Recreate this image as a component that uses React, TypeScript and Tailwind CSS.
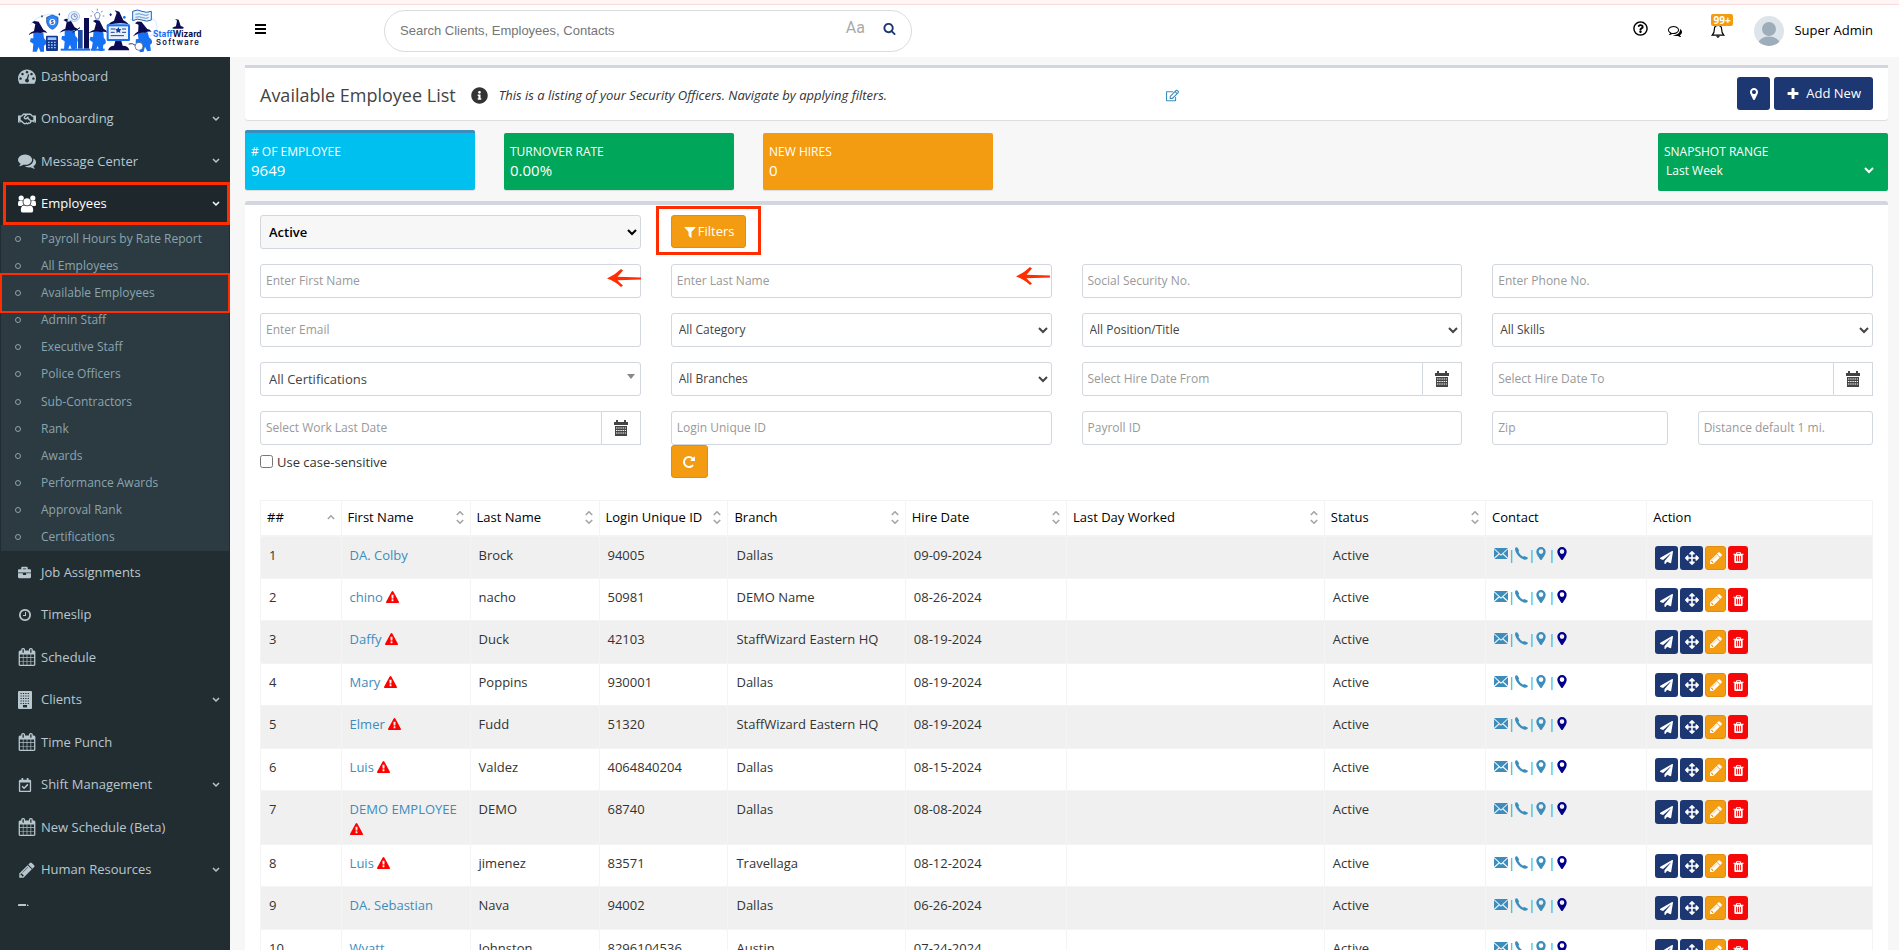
import React from 'react';
import {
  FaArrowsAlt,
  FaBriefcase,
  FaInfoCircle,
  FaPaperPlane,
  FaRegCalendarCheck,
  FaRegEdit,
  FaRegHandshake,
  FaRegQuestionCircle,
} from 'react-icons/fa';

interface GlyphProps {
  d: string;
  className?: string;
}

// Solid glyphs drawn on a 1792 unit grid
const Glyph: React.FC<GlyphProps> = ({ d, className = 'size-[14px]' }) => (
  <svg viewBox="0 0 1792 1792" fill="currentColor" className={`shrink-0 ${className}`} aria-hidden="true">
    <path d={d} />
  </svg>
);

const PATHS = {
  search:
    'M1216 832q0-185-131.5-316.5t-316.5-131.5-316.5 131.5-131.5 316.5 131.5 316.5 316.5 131.5 316.5-131.5 131.5-316.5zm512 832q0 52-38 90t-90 38q-54 0-90-38l-343-342q-179 124-399 124-143 0-273.5-55.5t-225-150-150-225-55.5-273.5 55.5-273.5 150-225 225-150 273.5-55.5 273.5 55.5 225 150 150 225 55.5 273.5q0 220-124 399l343 343q37 37 37 90z',
  filter:
    'M1595 295q17 41-14 70l-493 493v742q0 42-39 59-13 5-25 5-27 0-45-19l-256-256q-19-19-19-45v-486l-493-493q-31-29-14-70 17-39 59-39h1280q42 0 59 39z',
  calendar:
    'M192 1664h288v-288h-288v288zm352 0h320v-288h-320v288zm-352-352h288v-320h-288v320zm352 0h320v-320h-320v320zm-352-384h288v-288h-288v288zm736 736h320v-288h-320v288zm-384-736h320v-288h-320v288zm768 736h288v-288h-288v288zm-384-352h320v-320h-320v320zm-352-864v-288q0-13-9.5-22.5t-22.5-9.5h-64q-13 0-22.5 9.5t-9.5 22.5v288q0 13 9.5 22.5t22.5 9.5h64q13 0 22.5-9.5t9.5-22.5zm736 864h288v-320h-288v320zm-384-384h320v-288h-320v288zm384 0h288v-288h-288v288zm32-480v-288q0-13-9.5-22.5t-22.5-9.5h-64q-13 0-22.5 9.5t-9.5 22.5v288q0 13 9.5 22.5t22.5 9.5h64q13 0 22.5-9.5t9.5-22.5zm384-64v1280q0 52-38 90t-90 38h-1408q-52 0-90-38t-38-90v-1280q0-52 38-90t90-38h128v-96q0-66 47-113t113-47h64q66 0 113 47t47 113v96h384v-96q0-66 47-113t113-47h64q66 0 113 47t47 113v96h128q52 0 90 38t38 90z',
  dashboard:
    'M384 1152q0-53-37.5-90.5t-90.5-37.5-90.5 37.5-37.5 90.5 37.5 90.5 90.5 37.5 90.5-37.5 37.5-90.5zm192-448q0-53-37.5-90.5t-90.5-37.5-90.5 37.5-37.5 90.5 37.5 90.5 90.5 37.5 90.5-37.5 37.5-90.5zm428 481l101-382q6-26-7.5-48.5t-38.5-29.5-48 6.5-30 39.5l-101 382q-60 5-107 43.5t-63 98.5q-20 77 20 146t117 89 146-20 89-117q16-60-6-117t-72-91zm660-33q0-53-37.5-90.5t-90.5-37.5-90.5 37.5-37.5 90.5 37.5 90.5 90.5 37.5 90.5-37.5 37.5-90.5zm-640-640q0-53-37.5-90.5t-90.5-37.5-90.5 37.5-37.5 90.5 37.5 90.5 90.5 37.5 90.5-37.5 37.5-90.5zm448 192q0-53-37.5-90.5t-90.5-37.5-90.5 37.5-37.5 90.5 37.5 90.5 90.5 37.5 90.5-37.5 37.5-90.5zm320 448q0 261-141 483-19 29-54 29h-1402q-35 0-54-29-141-221-141-483 0-182 71-348t191-286 286-191 348-71 348 71 286 191 191 286 71 348z',
  comments:
    'M1408 768q0 139-94 257t-256.5 186.5-353.5 68.5q-86 0-176-16-124 88-278 128-36 9-86 16h-3q-11 0-20.5-8t-11.5-21q-1-3-1-6.5t.5-6.5 2-6l2.5-5 3.5-5.5 4-5 4.5-5 4-4.5q5-6 23-25t26-29.5 22.5-29 25-38.5 20.5-44q-124-72-195-177t-71-224q0-139 94-257t256.5-186.5 353.5-68.5 353.5 68.5 256.5 186.5 94 257zm384 256q0 120-71 224.5t-195 176.5q10 24 20.5 44t25 38.5 22.5 29 26 29.5 23 25q1 1 4 4.5t4.5 5 4 5 3.5 5.5l2.5 5 2 6 .5 6.5-1 6.5q-3 14-13 22t-22 7q-50-7-86-16-154-40-278-128-90 16-176 16-271 0-472-132 58 4 88 4 161 0 309-45t264-129q125-92 192-212t67-254q0-77-23-152 129 71 204 178t75 230z',
  commentsOutline:
    'M704 384q-153 0-286 52t-211.5 141-78.5 191q0 82 53 158t149 132l97 56-35 84q34-20 62-39l44-31 53 10q78 14 153 14 153 0 286-52t211.5-141 78.5-191-78.5-191-211.5-141-286-52zm0-128q191 0 353.5 68.5t256.5 186.5 94 257-94 257-256.5 186.5-353.5 68.5q-86 0-176-16-124 88-278 128-36 9-86 16h-3q-11 0-20.5-8t-11.5-21q-1-3-1-6.5t.5-6.5 2-6l2.5-5 3.5-5.5 4-5 4.5-5 4-4.5q5-6 23-25t26-29.5 22.5-29 25-38.5 20.5-44q-124-72-195-177t-71-224q0-139 94-257t256.5-186.5 353.5-68.5zm822 1169q10 24 20.5 44t25 38.5 22.5 29 26 29.5 23 25q1 1 4 4.5t4.5 5 4 5 3.5 5.5l2.5 5 2 6 .5 6.5-1 6.5q-3 14-13 22t-22 7q-50-7-86-16-154-40-278-128-90 16-176 16-271 0-472-132 58 4 88 4 161 0 309-45t264-129q125-92 192-212t67-254q0-77-23-152 129 71 204 178t75 230q0 120-71 224.5t-195 176.5z',
  plus: 'M1600 736v192q0 40-28 68t-68 28h-416v416q0 40-28 68t-68 28h-192q-40 0-68-28t-28-68v-416h-416q-40 0-68-28t-28-68v-192q0-40 28-68t68-28h416v-416q0-40 28-68t68-28h192q40 0 68 28t28 68v416h416q40 0 68 28t28 68z',
  marker:
    'M1152 640q0-106-75-181t-181-75-181 75-75 181 75 181 181 75 181-75 75-181zm256 0q0 109-33 179l-364 774q-16 33-47.5 52t-67.5 19-67.5-19-46.5-52l-365-774q-33-70-33-179 0-212 150-362t362-150 362 150 150 362z',
  repeat:
    'M1664 256v448q0 26-19 45t-45 19h-448q-42 0-59-40-17-39 14-69l138-138q-148-137-349-137-104 0-198.5 40.5t-163.5 109.5-109.5 163.5-40.5 198.5 40.5 198.5 109.5 163.5 163.5 109.5 198.5 40.5q119 0 225-52t179-147q7-10 23-12 15 0 25 9l137 138q9 8 9.5 20.5t-7.5 22.5q-109 132-264 204.5t-327 72.5q-156 0-298-61t-245-164-164-245-61-298 61-298 164-245 245-164 298-61q147 0 284.5 55.5t244.5 156.5l130-129q29-31 70-14 39 17 39 59z',
  pencil:
    'M491 1536l91-91-235-235-91 91v107h128v128h107zm523-928q0-22-22-22-10 0-17 7l-542 542q-7 7-7 17 0 22 22 22 10 0 17-7l542-542q7-7 7-17zm-54-192l416 416-832 832h-416v-416zm683 96q0 53-37 90l-166 166-416-416 166-165q36-38 90-38 53 0 91 38l235 234q37 39 37 91z',
  trash:
    'M704 1376v-704q0-14-9-23t-23-9h-64q-14 0-23 9t-9 23v704q0 14 9 23t23 9h64q14 0 23-9t9-23zm256 0v-704q0-14-9-23t-23-9h-64q-14 0-23 9t-9 23v704q0 14 9 23t23 9h64q14 0 23-9t9-23zm256 0v-704q0-14-9-23t-23-9h-64q-14 0-23 9t-9 23v704q0 14 9 23t23 9h64q14 0 23-9t9-23zm-544-992h448l-48-117q-7-9-17-11h-317q-10 2-17 11zm928 32v64q0 14-9 23t-23 9h-96v948q0 83-47 143.5t-113 60.5h-832q-66 0-113-58.5t-47-141.5v-952h-96q-14 0-23-9t-9-23v-64q0-14 9-23t23-9h309l70-167q15-37 54-63t79-26h320q40 0 79 26t54 63l70 167h309q14 0 23 9t9 23z',
  clock:
    'M1024 544v448q0 14-9 23t-23 9h-320q-14 0-23-9t-9-23v-64q0-14 9-23t23-9h224v-352q0-14 9-23t23-9h64q14 0 23 9t9 23zm416 352q0-148-73-273t-198-198-273-73-273 73-198 198-73 273 73 273 198 198 273 73 273-73 198-198 73-273zm224 0q0 209-103 385.5t-279.5 279.5-385.5 103-385.5-103-279.5-279.5-103-385.5 103-385.5 279.5-279.5 385.5-103 385.5 103 279.5 279.5 103 385.5z',
  warning:
    'M1024 1375v-190q0-14-9.5-23.5t-22.5-9.5h-192q-13 0-22.5 9.5t-9.5 23.5v190q0 14 9.5 23.5t22.5 9.5h192q13 0 22.5-9.5t9.5-23.5zm-2-374l18-459q0-12-10-19-13-11-24-11h-220q-11 0-24 11-10 7-10 21l17 457q0 10 10 16.5t24 6.5h185q14 0 23.5-6.5t10.5-16.5zm-14-934l768 1408q35 63-2 126-17 29-46.5 46t-63.5 17h-1536q-34 0-63.5-17t-46.5-46q-37-63-2-126l768-1408q17-31 47-49t65-18 65 18 47 49z',
};

const UsersIcon = () => (
  <svg viewBox="0 0 18 18" fill="currentColor" className="h-[18px] w-[18px]" aria-hidden="true">
    <circle cx="3.2" cy="3" r="2.6" />
    <circle cx="14.8" cy="3" r="2.6" />
    <path d="M0 10V8.2Q0 5.8 1.8 5.8H4.6Q4.4 8.4 5.6 9.8Q4 10 3.4 11H1.4Q0 11 0 10zM18 10V8.2Q18 5.8 16.2 5.8H13.4Q13.6 8.4 12.4 9.8Q14 10 14.6 11H16.6Q18 11 18 10z" />
    <circle cx="9" cy="6.8" r="3.6" />
    <path d="M2.8 15.4Q2.8 10.4 6 10.4Q9 12 12 10.4Q15.2 10.4 15.2 15.4Q15.2 17.6 13 17.6H5Q2.8 17.6 2.8 15.4z" />
  </svg>
);

const BuildingIcon = () => (
  <svg viewBox="0 0 14 18" className="h-[18px] w-[14px]" aria-hidden="true">
    <rect width="14" height="18" rx="1" fill="currentColor" />
    {[2.5, 5, 7.5, 10, 12.5].map((y) => (
      <path key={y} d={`M2.5 ${y}h1.2m1.2 0h1.2m1.2 0h1.2m1.2 0h1.2`} stroke="#222d32" strokeWidth="1.2" />
    ))}
    <rect x="5" y="14" width="4" height="2.4" fill="#222d32" />
  </svg>
);

const FileIcon = () => (
  <svg viewBox="0 0 12 14" fill="currentColor" className="h-[14px] w-3" aria-hidden="true">
    <path d="M1 0h7v4h4v9q0 1-1 1H1q-1 0-1-1V1q0-1 1-1zM9 0l3 3H9z" />
  </svg>
);

const GridCalendar = () => (
  <svg viewBox="0 0 14 16" className="h-4 w-[14px]" aria-hidden="true">
    <path d="M0 2h2V0h2v2h6V0h2v2h2v3H0zM1 6h12v10H1z" fill="#444" />
    <path d="M2 8h10M2 10.5h10M2 13h10" stroke="#fff" strokeWidth="1.2" strokeDasharray="1.4 0.8" />
  </svg>
);

const Envelope = () => (
  <svg viewBox="0 0 14 11" className="h-[11px] w-[14px]" aria-hidden="true">
    <path d="M0 0h14L7 6.4zM0 1.2L4.6 5.6 0 9.8zM14 1.2L9.4 5.6 14 9.8zM.4 11L5.4 6.4 7 7.8 8.6 6.4 13.6 11z" fill="#3c8dbc" />
  </svg>
);

const Phone = () => (
  <svg viewBox="0 0 13 13" className="h-[13px] w-[13px]" aria-hidden="true">
    <path d="M.6.6Q1.8-.2 2.6.8L4 3.2Q4.4 4 3.4 4.8Q4.8 7.8 8.2 9.8Q9 8.8 9.8 9.2L12.6 10.4Q13.2 11 12.4 12Q11 13.2 8.8 12.6Q2.2 9.6.2 3.4Q-.2 1.6.6.6z" fill="#3c8dbc" />
  </svg>
);

const Pin = () => (
  <svg viewBox="0 0 13 13" fill="currentColor" className="h-[13px] w-[13px]" aria-hidden="true">
    <path fillRule="evenodd" d="M6 0a4.7 4.7 0 0 1 4.7 4.7Q10.7 6.4 9.5 8.4L6.9 12.5Q6 13.5 5.1 12.5L2.5 8.4Q1.3 6.4 1.3 4.7A4.7 4.7 0 0 1 6 0zm0 2.3a2.3 2.3 0 1 0 0 4.6 2.3 2.3 0 0 0 0-4.6z" />
  </svg>
);

const Chevron = () => (
  <svg viewBox="0 0 8 6" className="h-[6px] w-2" aria-hidden="true">
    <path d="M1 1l3 3 3-3" fill="none" stroke="currentColor" strokeWidth="1.5" />
  </svg>
);

const SortIcon: React.FC<{ ascending?: boolean }> = ({ ascending }) => (
  <svg viewBox="0 0 8 13" className="h-[13px] w-2 shrink-0" fill="none" stroke="#a5a5a5" strokeWidth="1.6" aria-hidden="true">
    {ascending ? (
      <path d="M.8 8L4 4.8 7.2 8" />
    ) : (
      <path d="M.8 4L4 .8 7.2 4M.8 9L4 12.2 7.2 9" />
    )}
  </svg>
);

// One wizard: pointed hat over a rounded body
const Wizard: React.FC<{ x: number; y: number; tilt?: number }> = ({ x, y, tilt = 0 }) => (
  <g transform={`translate(${x} ${y}) rotate(${tilt} 22 40)`}>
    <path d="M8 34Q22 28 38 34L40 50Q50 58 46 68L40 72 40 90H29L24 76 18 90H6L8 66-2 60 0 50 8 50z" fill="#1671f5" />
    <path d="M-8 40Q2 30 10 28L14 8 4 2 12-2 24 0 38 24Q46 26 50 34Q40 30 30 34Q16 30-8 40z" fill="#0b0b52" />
  </g>
);

const Logo = () => (
  <svg viewBox="0 0 570 156" className="h-[52px] w-[190px]" role="img" aria-label="StaffWizard Software">
    <path d="M330 45Q420 20 410 75Q400 100 360 92M30 60Q60 20 110 30" fill="none" stroke="#bcd9fb" strokeWidth="2" />
    <Wizard x={32} y={50} />
    <rect x="78" y="92" width="36" height="46" rx="3" fill="#12398f" />
    <rect x="83" y="97" width="26" height="8" fill="#9cc6ff" />
    <path d="M84 112h5m4 0h5m4 0h5M84 120h5m4 0h5m4 0h5M84 128h5m4 0h5m4 0h5" stroke="#9cc6ff" strokeWidth="4" />
    <path d="M97 30l17 7v14q-2 16-17 22-15-6-17-22V37z" fill="#2b86f7" stroke="#0f3d9c" strokeWidth="2" />
    <circle cx="97" cy="51" r="9" fill="#fff" />
    <text x="92" y="57" fontSize="16" fontWeight="700" fill="#0f3d9c" fontFamily="Liberation Sans, sans-serif">$</text>
    <Wizard x={126} y={43} />
    <path d="M158 82l22-14" stroke="#0b0b52" strokeWidth="3" />
    <path d="M145 34a17 15 0 1 1 8 13l-10 3z" fill="#e8f2ff" stroke="#7eb5f8" strokeWidth="2" />
    <circle cx="163" cy="35" r="9" fill="none" stroke="#51619b" strokeWidth="2" />
    <path d="M163 29v6h5" fill="none" stroke="#51619b" strokeWidth="2" />
    <rect x="157" y="101" width="14" height="30" fill="#1671f5" />
    <rect x="174" y="75" width="14" height="56" fill="#1a4ca8" />
    <rect x="192" y="39" width="15" height="92" fill="#0b0b52" />
    <rect x="122" y="131" width="88" height="6" fill="#1671f5" />
    <Wizard x={212} y={47} tilt={4} />
    <rect x="212" y="131" width="42" height="6" fill="#1671f5" />
    <path d="M225 34a8 8 0 1 1 14 0l-3 8h-8zM229 46h7M220 22l-5-4M243 22l5-4M216 33h-5M248 33h5M232 17v-6" fill="none" stroke="#31579f" strokeWidth="2" />
    <path d="M262 60Q274 50 282 47L290 24 284 16 298 20 310 46Q320 50 326 58Q300 50 262 60z" fill="#0b0b52" />
    <rect x="260" y="58" width="70" height="50" rx="4" fill="#1671f5" />
    <rect x="266" y="64" width="58" height="38" fill="#e8f2ff" />
    <path d="M272 72h14m20 0h12M272 82h12m22 0h12M272 92h40" stroke="#2a3c85" strokeWidth="3" />
    <path d="M295 66l3 6 6 1-4 5 1 6-6-3-6 3 1-6-4-5 6-1z" fill="#0f3d9c" />
    <path d="M286 108h18l4 14q18 0 20 14h-64q4-14 18-14z" fill="#0b0b52" />
    <path d="M338 19q14-8 28 0 14 6 28 0v26q-14 7-28 0-14-6-28 2z" fill="#e8f2ff" stroke="#2365b5" strokeWidth="3" />
    <path d="M346 28q12-4 22 1 10 4 18 0M346 37q12-4 22 1 10 4 18 0" fill="none" stroke="#2365b5" strokeWidth="2" />
    <circle cx="313" cy="37" r="4" fill="#1671f5" />
    <path d="M272 24l4 5-4 5-4-5zM66 30l3 4-3 4-3-4zM118 24l3 4-3 4-3-4z" fill="#173994" />
    <Wizard x={346} y={50} tilt={-8} />
    <circle cx="357" cy="124" r="12" fill="#fff" stroke="#333f6d" strokeWidth="2" />
    <path d="M326 117q12-4 20 4" fill="none" stroke="#333f6d" strokeWidth="3" />
    <path d="M456 69q8-4 12-5l3-17-6-5 11 2 6 19q8 2 10 6l-5 2H461z" fill="#0b0b52" />
    <text x="399" y="97" fontSize="25" fontWeight="700" fontFamily="Inter, sans-serif" fill="#101046">
      <tspan fill="#1671f5">Staff</tspan>Wizard
    </text>
    <text x="408" y="121" fontSize="23" fontWeight="600" letterSpacing="4" fontFamily="Inter, sans-serif" fill="#101046">
      Software
    </text>
  </svg>
);

interface NavItem {
  label: string;
  icon: React.ReactNode;
  expandable?: boolean;
  active?: boolean;
}

const TOP_NAV: NavItem[] = [
  { label: 'Dashboard', icon: <Glyph d={PATHS.dashboard} className="size-[18px]" /> },
  { label: 'Onboarding', icon: <FaRegHandshake className="size-[18px]" />, expandable: true },
  { label: 'Message Center', icon: <Glyph d={PATHS.comments} className="size-[18px]" />, expandable: true },
  { label: 'Employees', icon: <UsersIcon />, expandable: true, active: true },
];

const SUB_NAV = [
  'Payroll Hours by Rate Report',
  'All Employees',
  'Available Employees',
  'Admin Staff',
  'Executive Staff',
  'Police Officers',
  'Sub-Contractors',
  'Rank',
  'Awards',
  'Performance Awards',
  'Approval Rank',
  'Certifications',
];

const BOTTOM_NAV: NavItem[] = [
  { label: 'Job Assignments', icon: <FaBriefcase className="size-[13px]" /> },
  { label: 'Timeslip', icon: <Glyph d={PATHS.clock} /> },
  { label: 'Schedule', icon: <Glyph d={PATHS.calendar} className="size-[18px]" /> },
  { label: 'Clients', icon: <BuildingIcon />, expandable: true },
  { label: 'Time Punch', icon: <Glyph d={PATHS.calendar} className="size-[18px]" /> },
  { label: 'Shift Management', icon: <FaRegCalendarCheck className="size-[14px]" />, expandable: true },
  { label: 'New Schedule (Beta)', icon: <Glyph d={PATHS.calendar} className="size-[18px]" /> },
  { label: 'Human Resources', icon: <Glyph d={PATHS.pencil} className="size-[18px]" />, expandable: true },
];

const NavLink: React.FC<{ item: NavItem }> = ({ item }) => (
  <a
    href="#"
    className={`relative flex flex-1 items-center pr-[10px] pl-[18px] text-[13px] ${
      item.active ? 'bg-[#1e282c] text-white' : 'text-[#b8c7ce]'
    }`}
  >
    <span className="flex w-[23px]">{item.icon}</span>
    <span className="flex-1">{item.label}</span>
    {item.expandable && <Chevron />}
    {item.active && <span className="absolute -top-px right-0 bottom-0 left-[3px] border-[3px] border-[#ff2d00]" />}
  </a>
);

const Sidebar = () => (
  <aside className="w-[230px] shrink-0 overflow-hidden bg-[#222d32] pb-[42px]">
    <nav className="-mt-[2px] h-full overflow-hidden">
      <div className="flex h-[170px] flex-col">
        {TOP_NAV.map((item) => (
          <NavLink key={item.label} item={item} />
        ))}
      </div>
      <ul className="mx-px flex h-[326px] flex-col bg-[#2c3b41]">
        {SUB_NAV.map((label) => (
          <li key={label} className="relative flex flex-1">
            <a href="#" className="flex flex-1 items-center pl-[14px] text-[12px] text-[#8aa4af]">
              <span className="mr-5 size-[6px] rounded-full border border-[#8aa4af]" />
              {label}
            </a>
            {label === 'Available Employees' && (
              <span className="absolute -inset-x-px -inset-y-[6px] z-10 border-2 border-[#ff2d00]" />
            )}
          </li>
        ))}
      </ul>
      <div className="flex h-[340px] flex-col">
        {BOTTOM_NAV.map((item) => (
          <NavLink key={item.label} item={item} />
        ))}
      </div>
      <a href="#" aria-label="Reports" className="flex h-10 items-center pl-[18px] text-[#b8c7ce]">
        <FileIcon />
      </a>
    </nav>
  </aside>
);

const Header = () => (
  <header className="relative z-10 flex h-[57px] shrink-0 items-center border-t-4 border-[#fff5f5] bg-white">
    <span className="absolute inset-x-0 top-0 h-px bg-[#f7dada]" />
    <div className="w-[230px] shrink-0 pl-5">
      <Logo />
    </div>
    <button type="button" aria-label="Toggle navigation" className="mb-1 ml-[25px] flex w-[11px] flex-col gap-[2px]">
      <span className="h-[2px] bg-black" />
      <span className="h-[2px] bg-black" />
      <span className="h-[2px] bg-black" />
    </button>
    <form className="ml-[118px] flex h-[42px] w-[528px] items-center rounded-full border border-[#dcdcdc] px-[15px]">
      <input
        type="text"
        aria-label="Search"
        placeholder="Search Clients, Employees, Contacts"
        className="min-w-0 flex-1 font-['Liberation_Sans',sans-serif] text-[13px] outline-none placeholder:text-[#757575]"
      />
      <button type="button" className="mr-[18px] mb-[6px] font-['Roboto',sans-serif] text-base text-[#aaa]">
        Aa
      </button>
      <button type="button" aria-label="Search" className="mb-1 text-[#1c3771]">
        <Glyph d={PATHS.search} className="size-[13px]" />
      </button>
    </form>
    <div className="ml-auto flex items-center pr-[26px]">
      <button type="button" aria-label="Help" className="mr-5 mb-1">
        <FaRegQuestionCircle className="size-[15px]" />
      </button>
      <button type="button" aria-label="Messages" className="mr-[29px]">
        <Glyph d={PATHS.commentsOutline} />
      </button>
      <button type="button" aria-label="Notifications" className="relative mr-[29px]">
        <svg viewBox="0 0 14 14" className="size-[14px]" fill="none" stroke="#000" strokeWidth="1.2" aria-hidden="true">
          <path d="M1.2 11.2Q3.4 9.2 3.4 5Q3.4 1.5 7 1.5T10.6 5Q10.6 9.2 12.8 11.2zM5.8 12Q7 14.4 8.2 12" />
        </svg>
        <span className="absolute -top-[10px] left-0 rounded-[2px] bg-[#f39c12] px-[2px] text-[10px] leading-[12px] font-bold text-white">
          99+
        </span>
      </button>
      <svg viewBox="0 0 30 30" className="mr-[10px] size-[30px] rounded-full" aria-hidden="true">
        <rect width="30" height="30" fill="#dde4ea" />
        <circle cx="15" cy="13" r="7" fill="#9eadba" />
        <ellipse cx="15" cy="28" rx="11" ry="7.5" fill="#9eadba" />
      </svg>
      <a href="#" className="text-[13px] text-black">Super Admin</a>
    </div>
  </header>
);

const PageTitle = () => (
  <section className="flex h-[55px] items-center rounded-b-[3px] border-t-[3px] border-[#d2d6de] bg-white px-[15px] pt-[3px] shadow-[0_1px_1px_rgba(0,0,0,0.1)]">
    <h1 className="text-[18px] text-[#444]">Available Employee List</h1>
    <FaInfoCircle className="ml-[15px] size-[17px] text-[#333]" />
    <p className="ml-[11px] w-[667px] text-[13px] text-[#333] italic">
      This is a listing of your Security Officers. Navigate by applying filters.
    </p>
    <button type="button" aria-label="Edit description">
      <FaRegEdit className="size-[13px] text-[#3c8dbc]" />
    </button>
    <div className="mb-1 ml-auto flex gap-1">
      <button type="button" aria-label="Map" className="flex h-[33px] w-[33px] items-center justify-center rounded-[3px] bg-[#1c3771] text-white">
        <Glyph d={PATHS.marker} />
      </button>
      <button type="button" className="flex h-[33px] items-center gap-[6px] rounded-[3px] bg-[#1c3771] px-3 text-[13px] text-white">
        <Glyph d={PATHS.plus} />
        Add New
      </button>
    </div>
  </section>
);

interface StatProps {
  label: string;
  value: string;
  className: string;
}

const StatCard: React.FC<StatProps> = ({ label, value, className }) => (
  <div className={`w-[230px] rounded-[2px] px-[6px] pt-[10px] pb-[11px] text-white shadow-[0_1px_1px_rgba(0,0,0,0.1)] ${className}`}>
    <div className="text-[12px] leading-[18px]">{label}</div>
    <div className="text-[15px] leading-[18px]">{value}</div>
  </div>
);

const Stats = () => (
  <section className="mt-[10px] mb-[10px] flex h-[61px] items-start gap-[29px]">
    <StatCard label="# OF EMPLOYEE" value="9649" className="border-t-[3px] border-[#3c8dbc] bg-[#00c0ef]" />
    <StatCard label="TURNOVER RATE" value="0.00%" className="mt-[3px] bg-[#00a65a]" />
    <StatCard label="NEW HIRES" value="0" className="mt-[3px] bg-[#f39c12]" />
    <div className="mt-[3px] ml-auto flex h-[58px] w-[230px] flex-col rounded-[2px] bg-[#00a65a] px-[6px] pt-[10px] text-white">
      <label htmlFor="snapshot" className="text-[12px] leading-[18px]">SNAPSHOT RANGE</label>
      <select id="snapshot" className="mr-[5px] -ml-[2px] h-[18px] bg-transparent text-[12px] text-white">
        <option>Last Week</option>
      </select>
    </div>
  </section>
);

const FIELD = 'h-[34px] w-full min-w-0 rounded-[3px] border border-[#d2d6de] bg-white text-[12px] text-[#444] outline-none placeholder:text-[#999]';

const TextField: React.FC<{ label: string }> = ({ label }) => (
  <input type="text" aria-label={label} placeholder={label} className={`${FIELD} px-[5px] pb-[2px]`} />
);

const SelectField: React.FC<{ label: string }> = ({ label }) => (
  <select aria-label={label} className={`${FIELD} px-[3px] pb-[2px]`}>
    <option>{label}</option>
  </select>
);

const DateField: React.FC<{ label: string }> = ({ label }) => (
  <div className="flex">
    <input type="text" aria-label={label} placeholder={label} className={`${FIELD} flex-1 rounded-r-none px-[5px] pb-[2px]`} />
    <button type="button" aria-label={`${label} calendar`} className="flex h-[34px] w-[39px] shrink-0 items-center justify-center border border-l-0 border-[#d2d6de]">
      <GridCalendar />
    </button>
  </div>
);

const PointerArrow = ({ className }: { className: string }) => (
  <svg viewBox="0 0 34 18" className={`absolute h-[18px] w-[34px] ${className}`} aria-hidden="true">
    <path d="M0 9.5Q8 6 14 0L16 1.5Q13 5 10.5 7.8L34 8.5V10.5L10.5 11.2Q13 14 16 16.5L14 18Q8 12 0 9.5z" fill="#ff2d00" />
  </svg>
);

const Filters = () => (
  <form className="grid grid-cols-4 gap-x-[30px] gap-y-[15px]">
    <select aria-label="Employee status" className="h-[34px] rounded-[3px] border border-[#d2d6de] bg-[#f7f7f7] px-1 text-[13px] font-semibold text-black outline-none">
      <option>Active</option>
    </select>
    <div className="relative col-span-3 h-[34px]">
      <button type="button" className="flex h-[33px] items-center gap-px rounded-[3px] border border-[#e08e0b] bg-[#f39c12] px-[11px] text-[13px] text-white">
        <Glyph d={PATHS.filter} />
        Filters
      </button>
      <span className="absolute -top-[9px] -left-[15px] h-[49px] w-[105px] border-[3px] border-[#ff2d00]" />
    </div>

    <div className="relative">
      <TextField label="Enter First Name" />
      <PointerArrow className="top-[5px] right-0" />
    </div>
    <div className="relative">
      <TextField label="Enter Last Name" />
      <PointerArrow className="top-[3px] right-[2px]" />
    </div>
    <TextField label="Social Security No." />
    <TextField label="Enter Phone No." />

    <TextField label="Enter Email" />
    <SelectField label="All Category" />
    <SelectField label="All Position/Title" />
    <SelectField label="All Skills" />

    <div className="relative">
      <select aria-label="All Certifications" className="h-[34px] w-full appearance-none rounded-[3px] border border-[#d2d6de] bg-white px-2 pt-px text-[13px] text-[#444] outline-none">
        <option>All Certifications</option>
      </select>
      <span className="absolute top-3 right-[6px] border-x-[4px] border-t-[5px] border-x-transparent border-t-[#888]" />
    </div>
    <SelectField label="All Branches" />
    <DateField label="Select Hire Date From" />
    <DateField label="Select Hire Date To" />

    <DateField label="Select Work Last Date" />
    <TextField label="Login Unique ID" />
    <TextField label="Payroll ID" />
    <div className="grid grid-cols-2 gap-[30px]">
      <TextField label="Zip" />
      <TextField label="Distance default 1 mi." />
    </div>

    <label className="-mt-[15px] flex h-[35px] items-center gap-1 text-[13px] text-[#333]">
      <input type="checkbox" className="mb-[3px] size-[13px]" />
      Use case-sensitive
    </label>
    <div className="-mt-[15px] h-[34px]">
      <button type="button" aria-label="Reset filters" className="flex h-[33px] w-[37px] items-center justify-center rounded-[3px] border border-[#e08e0b] bg-[#f39c12] text-white">
        <Glyph d={PATHS.repeat} />
      </button>
    </div>
  </form>
);

interface Employee {
  id: number;
  first: string;
  last: string;
  login: string;
  branch: string;
  hired: string;
  alert: boolean;
}

const EMPLOYEES: Employee[] = [
  { id: 1, first: 'DA. Colby', last: 'Brock', login: '94005', branch: 'Dallas', hired: '09-09-2024', alert: false },
  { id: 2, first: 'chino', last: 'nacho', login: '50981', branch: 'DEMO Name', hired: '08-26-2024', alert: true },
  { id: 3, first: 'Daffy', last: 'Duck', login: '42103', branch: 'StaffWizard Eastern HQ', hired: '08-19-2024', alert: true },
  { id: 4, first: 'Mary', last: 'Poppins', login: '930001', branch: 'Dallas', hired: '08-19-2024', alert: true },
  { id: 5, first: 'Elmer', last: 'Fudd', login: '51320', branch: 'StaffWizard Eastern HQ', hired: '08-19-2024', alert: true },
  { id: 6, first: 'Luis', last: 'Valdez', login: '4064840204', branch: 'Dallas', hired: '08-15-2024', alert: true },
  { id: 7, first: 'DEMO EMPLOYEE', last: 'DEMO', login: '68740', branch: 'Dallas', hired: '08-08-2024', alert: true },
  { id: 8, first: 'Luis', last: 'jimenez', login: '83571', branch: 'Travellaga', hired: '08-12-2024', alert: true },
  { id: 9, first: 'DA. Sebastian', last: 'Nava', login: '94002', branch: 'Dallas', hired: '06-26-2024', alert: false },
  { id: 10, first: 'Wyatt', last: 'Johnston', login: '8296104536', branch: 'Austin', hired: '07-24-2024', alert: false },
];

const COLUMNS = [
  { label: '##', width: 'w-[5%]', sort: 'asc' },
  { label: 'First Name', width: 'w-[8%]', sort: 'both' },
  { label: 'Last Name', width: 'w-[8%]', sort: 'both' },
  { label: 'Login Unique ID', width: 'w-[8%]', sort: 'both' },
  { label: 'Branch', width: 'w-[11%]', sort: 'both' },
  { label: 'Hire Date', width: 'w-[10%]', sort: 'both' },
  { label: 'Last Day Worked', width: 'w-[16%]', sort: 'both' },
  { label: 'Status', width: 'w-[10%]', sort: 'both' },
  { label: 'Contact', width: 'w-[10%]', sort: '' },
  { label: 'Action', width: 'w-[14%]', sort: '' },
];

const CELL = 'border border-[#f4f4f4] px-2 pt-2 pb-[5px] align-top leading-[20px]';
const ACTION = 'flex h-[24px] items-center justify-center rounded-[3px] text-white';

const EmployeeRow: React.FC<{ employee: Employee }> = ({ employee }) => (
  <tr className="h-[42px] odd:h-[43px] odd:bg-[#f0f0f0]">
    <td className={CELL}>{employee.id}</td>
    <td className={CELL}>
      <a href="#" className="text-[#3c8dbc]">{employee.first}</a>{' '}
      {employee.alert && <Glyph d={PATHS.warning} className="inline size-[13px] align-[-2px] text-[#f00]" />}
    </td>
    <td className={CELL}>{employee.last}</td>
    <td className={CELL}>{employee.login}</td>
    <td className={CELL}>{employee.branch}</td>
    <td className={CELL}>{employee.hired}</td>
    <td className={CELL} />
    <td className={CELL}>Active</td>
    <td className={CELL}>
      <div className="flex h-5 items-center text-[#3c8dbc]">
        <a href="#" aria-label="Email" className="pb-[2px]"><Envelope /></a>
        <span>|</span>
        <a href="#" aria-label="Call" className="pb-[2px]"><Phone /></a>
        <span>|</span>
        <a href="#" aria-label="Location" className="pb-[2px]"><Pin /></a>
        <span>|</span>
        <a href="#" aria-label="Tracking" className="pb-[2px] text-[#00008b]"><Pin /></a>
      </div>
    </td>
    <td className="border border-[#f4f4f4] px-2 pt-[9px] align-top">
      <div className="flex gap-[2px]">
        <button type="button" aria-label="Send" className={`${ACTION} w-[23px] bg-[#1c3771]`}>
          <FaPaperPlane className="size-[13px]" />
        </button>
        <button type="button" aria-label="Move" className={`${ACTION} w-[23px] bg-[#1c3771]`}>
          <FaArrowsAlt className="size-[14px]" />
        </button>
        <button type="button" aria-label="Edit" className={`${ACTION} w-[21px] border border-[#e08e0b] bg-[#f39c12]`}>
          <Glyph d={PATHS.pencil} />
        </button>
        <button type="button" aria-label="Delete" className={`${ACTION} w-5 bg-[#f60808]`}>
          <Glyph d={PATHS.trash} className="size-[13px]" />
        </button>
      </div>
    </td>
  </tr>
);

const EmployeeTable = () => (
  <table className="mt-5 w-full table-fixed border-collapse text-[13px] text-[#333]">
    <thead>
      <tr className="h-[35px]">
        {COLUMNS.map((column) => (
          <th key={column.label} className={`border border-b-2 border-[#f4f4f4] px-[6px] text-left font-normal text-black ${column.width}`}>
            <div className="flex items-center justify-between whitespace-nowrap">
              {column.label}
              {column.sort && <SortIcon ascending={column.sort === 'asc'} />}
            </div>
          </th>
        ))}
      </tr>
    </thead>
    <tbody>
      {EMPLOYEES.map((employee) => (
        <EmployeeRow key={employee.id} employee={employee} />
      ))}
    </tbody>
  </table>
);

const App: React.FC = () => {
  return (
    <div className="flex h-screen flex-col overflow-hidden bg-[#f7f7f7] font-['Open_Sans',sans-serif]">
      <Header />
      <div className="flex min-h-0 flex-1">
        <Sidebar />
        <main className="min-w-0 flex-1 overflow-hidden pt-2 pr-[11px] pl-[15px]">
          <PageTitle />
          <Stats />
          <section className="rounded-t-[3px] border-t-4 border-[#d2d6de] bg-white px-[15px] pt-[10px]">
            <Filters />
            <EmployeeTable />
          </section>
        </main>
      </div>
    </div>
  );
};

export default App;
